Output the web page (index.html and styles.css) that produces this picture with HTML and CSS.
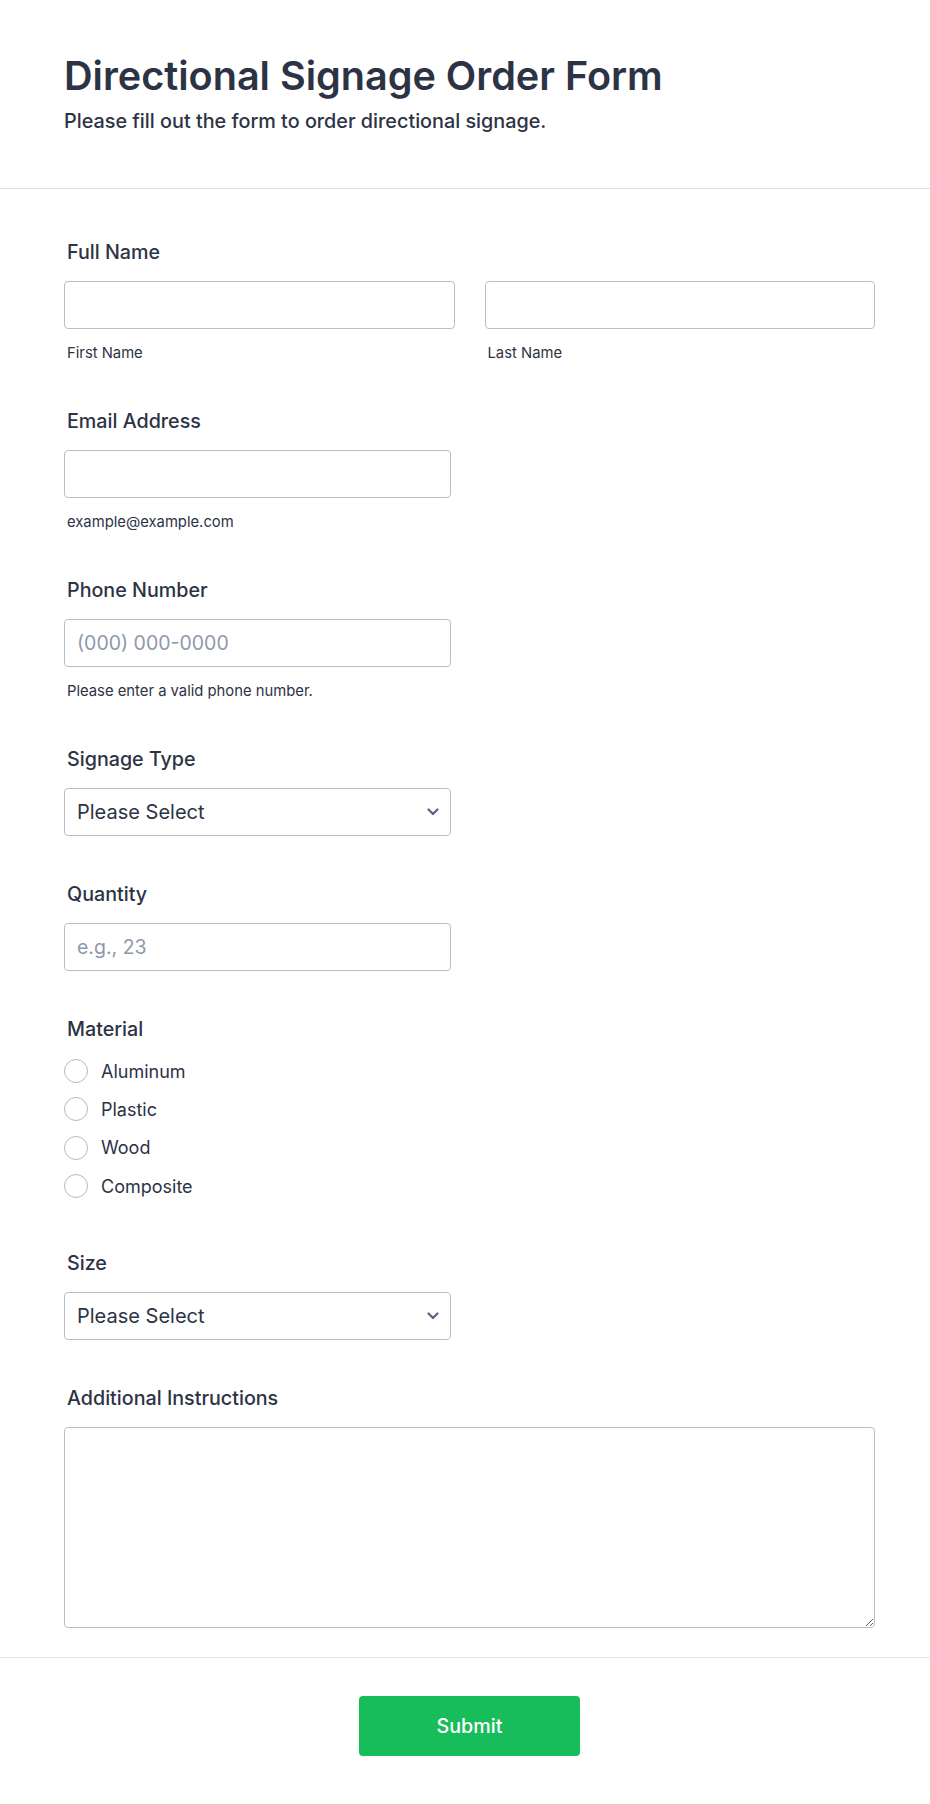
FILE: index.html
```html
<!DOCTYPE html>
<html lang="en">
<head>
    <meta charset="UTF-8">
    <meta name="viewport" content="width=device-width, initial-scale=1.0">
    <title>Directional Signage Order Form</title>
    <link rel="stylesheet" href="styles.css">
</head>
<body>
    <div class="form-header">
        <h1>Directional Signage Order Form</h1>
        <p class="subheader">Please fill out the form to order directional signage.</p>
    </div>

    <form class="form-body" onsubmit="return false;">
        <div class="field">
            <label class="field-label">Full Name</label>
            <div class="name-row">
                <div class="name-col">
                    <input type="text" class="text-input">
                    <span class="sublabel">First Name</span>
                </div>
                <div class="name-col">
                    <input type="text" class="text-input">
                    <span class="sublabel">Last Name</span>
                </div>
            </div>
        </div>

        <div class="field">
            <label class="field-label">Email Address</label>
            <input type="email" class="text-input half">
            <span class="sublabel">example@example.com</span>
        </div>

        <div class="field">
            <label class="field-label">Phone Number</label>
            <input type="tel" class="text-input half" placeholder="(000) 000-0000">
            <span class="sublabel">Please enter a valid phone number.</span>
        </div>

        <div class="field">
            <label class="field-label">Signage Type</label>
            <div class="select-wrap half">
                <select class="select-input">
                    <option>Please Select</option>
                    <option>Wall Mounted</option>
                    <option>Hanging</option>
                    <option>Free Standing</option>
                </select>
                <svg class="chevron" width="12" height="8" viewBox="0 0 12 8"><path d="M1.5 1.5 L6 6 L10.5 1.5" fill="none" stroke="#57647e" stroke-width="2.2" stroke-linecap="round" stroke-linejoin="round"/></svg>
            </div>
        </div>

        <div class="field">
            <label class="field-label">Quantity</label>
            <input type="number" class="text-input half" placeholder="e.g., 23">
        </div>

        <div class="field">
            <label class="field-label">Material</label>
            <div class="radio-list">
                <label class="radio-item"><input type="radio" name="material"><span class="radio-dot"></span>Aluminum</label>
                <label class="radio-item"><input type="radio" name="material"><span class="radio-dot"></span>Plastic</label>
                <label class="radio-item"><input type="radio" name="material"><span class="radio-dot"></span>Wood</label>
                <label class="radio-item"><input type="radio" name="material"><span class="radio-dot"></span>Composite</label>
            </div>
        </div>

        <div class="field">
            <label class="field-label">Size</label>
            <div class="select-wrap half">
                <select class="select-input">
                    <option>Please Select</option>
                    <option>Small</option>
                    <option>Medium</option>
                    <option>Large</option>
                </select>
                <svg class="chevron" width="12" height="8" viewBox="0 0 12 8"><path d="M1.5 1.5 L6 6 L10.5 1.5" fill="none" stroke="#57647e" stroke-width="2.2" stroke-linecap="round" stroke-linejoin="round"/></svg>
            </div>
        </div>

        <div class="field last">
            <label class="field-label">Additional Instructions</label>
            <textarea class="textarea-input"></textarea>
        </div>
    </form>

    <div class="form-footer">
        <button type="submit" class="submit-button">Submit</button>
    </div>
</body>
</html>
```

FILE: styles.css
```css
body {
    margin: 0;
    font-family: Inter, "Noto Sans", sans-serif;
    color: #2c3345; /* Dark slate text */
    background-color: #ffffff;
}

.form-header {
    padding: 52px 55px 55px 64px;
    border-bottom: 1px solid #dcdde6; /* Light divider */
}
.form-header h1 {
    margin: 0;
    font-size: 39.6px;
    font-weight: 600;
    line-height: 48px;
}
.subheader {
    margin: 9px 0 0;
    font-size: 19.8px;
    line-height: 24px;
    font-weight: 500;
}

.form-body {
    padding: 51px 55px 29px 64px;
    border-bottom: 1px solid #e6e7ee;
}
.field {
    margin-bottom: 46px;
}
.field.last {
    margin-bottom: 0;
}
.field-label {
    display: block;
    padding-left: 3px;
    font-size: 19.7px;
    font-weight: 500;
    line-height: 24px;
    margin-bottom: 17px;
}
.sublabel {
    display: block;
    padding-left: 3px;
    margin-top: 14px;
    font-size: 14.8px;
    line-height: 20px;
}

.name-row {
    display: flex;
    gap: 30px;
}
.name-col {
    flex: 1;
}

.text-input,
.select-input,
.textarea-input {
    box-sizing: border-box;
    width: 100%;
    height: 48px;
    padding: 0 12px;
    font-family: inherit;
    font-size: 19.5px;
    color: #2c3345;
    background-color: #ffffff;
    border: 1px solid #b8bdc9; /* Soft gray border */
    border-radius: 4px;
    outline: none;
}
.select-input {
    font-size: 20px;
}
.text-input::placeholder {
    color: #8f98aa;
}
.text-input[type="number"]::-webkit-inner-spin-button,
.text-input[type="number"]::-webkit-outer-spin-button {
    -webkit-appearance: none;
    margin: 0;
}
.half {
    width: 387px;
}

.select-wrap {
    position: relative;
}
.select-input {
    -webkit-appearance: none;
    appearance: none;
    cursor: pointer;
}
.chevron {
    position: absolute;
    top: 20px;
    right: 12px;
    pointer-events: none;
}

.radio-list {
    display: flex;
    flex-direction: column;
    margin-top: -6px;
}
.radio-item {
    display: flex;
    align-items: center;
    height: 38.3px;
    font-size: 18px;
    cursor: pointer;
}
.radio-item input {
    display: none;
}
.radio-dot {
    box-sizing: border-box;
    width: 24px;
    height: 24px;
    margin-right: 13px;
    border: 1px solid #b3b8c6;
    border-radius: 50%;
}

.textarea-input {
    display: block;
    height: 201px;
    padding: 12px;
    resize: vertical;
}

.form-footer {
    padding: 38px 55px 49px 64px;
    text-align: center;
}
.submit-button {
    width: 221px;
    height: 60px;
    font-family: inherit;
    font-size: 19.7px;
    font-weight: 500;
    color: #ffffff;
    background-color: #18bd5b; /* Green submit */
    border: none;
    border-radius: 4px;
    cursor: pointer;
}
.submit-button:hover {
    background-color: #16aa52;
}
```
